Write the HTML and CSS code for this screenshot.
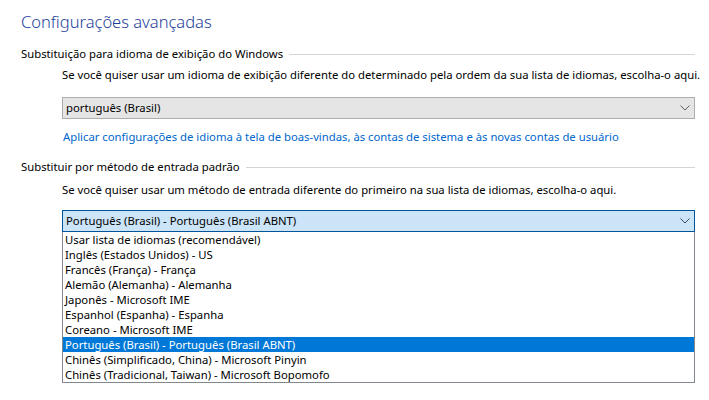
FILE: index.html
```html
<!DOCTYPE html>
<html lang="pt-BR">
<head>
<meta charset="utf-8">
<title>Configurações avançadas</title>
<link rel="stylesheet" href="styles.css">
</head>
<body>
<div class="page">
  <h1 class="title">Configurações avançadas</h1>

  <section class="group">
    <div class="group-head"><span class="group-label">Substituição para idioma de exibição do Windows</span><span class="rule"></span></div>
    <div class="group-body">
      <p class="desc">Se você quiser usar um idioma de exibição diferente do determinado pela ordem da sua lista de idiomas, escolha-o aqui.</p>
      <div class="combo combo-plain">
        <span class="combo-text">português (Brasil)</span>
        <svg class="chev" width="10" height="6" viewBox="0 0 10 6"><path d="M0.5 0.5 L5 5 L9.5 0.5" fill="none" stroke="#606060" stroke-width="1"/></svg>
      </div>
      <a class="link" href="#">Aplicar configurações de idioma à tela de boas-vindas, às contas de sistema e às novas contas de usuário</a>
    </div>
  </section>

  <section class="group group-2">
    <div class="group-head"><span class="group-label">Substituir por método de entrada padrão</span><span class="rule"></span></div>
    <div class="group-body">
      <p class="desc desc-2">Se você quiser usar um método de entrada diferente do primeiro na sua lista de idiomas, escolha-o aqui.</p>
      <div class="combo combo-open">
        <span class="combo-text">Português (Brasil) - Português (Brasil ABNT)</span>
        <svg class="chev" width="10" height="6" viewBox="0 0 10 6"><path d="M0.5 0.5 L5 5 L9.5 0.5" fill="none" stroke="#404a55" stroke-width="1"/></svg>
      </div>
      <ul class="list">
        <li>Usar lista de idiomas (recomendável)</li>
        <li>Inglês (Estados Unidos) - US</li>
        <li>Francês (França) - França</li>
        <li>Alemão (Alemanha) - Alemanha</li>
        <li>Japonês - Microsoft IME</li>
        <li>Espanhol (Espanha) - Espanha</li>
        <li>Coreano - Microsoft IME</li>
        <li class="selected">Português (Brasil) - Português (Brasil ABNT)</li>
        <li>Chinês (Simplificado, China) - Microsoft Pinyin</li>
        <li>Chinês (Tradicional, Taiwan) - Microsoft Bopomofo</li>
      </ul>
    </div>
  </section>
</div>
</body>
</html>
```

FILE: styles.css
```css
html, body {
  margin: 0;
  padding: 0;
  background: #ffffff;
}

body {
  font-family: "Noto Sans", "Open Sans", sans-serif;
  font-size: 11.3px;
  color: #000000;
}

.page {
  width: 709px;
  height: 400px;
  box-sizing: border-box;
  padding: 10px 14px 0 21px;
  display: flex;
  flex-direction: column;
  overflow: hidden;
}

.title {
  margin: 0;
  font-family: "Noto Sans", "Open Sans", sans-serif;
  font-weight: 300;
  font-size: 16.5px;
  line-height: 24px;
  color: #1e3f9c;
}

.group {
  display: flex;
  flex-direction: column;
  margin-top: 12px;
}

.group-2 {
  margin-top: 14px;
}

.group-head {
  display: flex;
  align-items: center;
  line-height: 16px;
  height: 16px;
}

.group-label {
  white-space: nowrap;
}

.rule {
  flex: 1;
  height: 1px;
  background: #d5d5d5;
  margin-left: 6px;
}

.group-body {
  display: flex;
  flex-direction: column;
  padding-left: 41px;
}

.desc {
  margin: 5px 0 0 0;
  line-height: 16px;
  white-space: nowrap;
}

.desc-2 {
  margin-top: 7px;
}

.combo {
  height: 22px;
  box-sizing: border-box;
  display: flex;
  align-items: center;
  justify-content: space-between;
  padding: 0 4px 0 3px;
  border: 1px solid #adadad;
  background: #e5e5e5;
}

.combo-plain {
  margin-top: 14px;
}

.combo-open {
  margin-top: 12px;
  background: #cce4f7;
  border-color: #005499;
}

.combo-text {
  line-height: 16px;
  white-space: nowrap;
}

.chev {
  display: block;
}

.link {
  margin-top: 10px;
  line-height: 16px;
  color: #0066cc;
  text-decoration: none;
  padding-left: 1px;
  white-space: nowrap;
}

.list {
  list-style: none;
  margin: 0;
  padding: 0;
  border: 1px solid #828790;
  border-top: none;
  background: #ffffff;
}

.list li {
  height: 15px;
  line-height: 15px;
  padding-left: 2px;
  white-space: nowrap;
}

.list li.selected {
  background: #0078d7;
  color: #ffffff;
}
```
